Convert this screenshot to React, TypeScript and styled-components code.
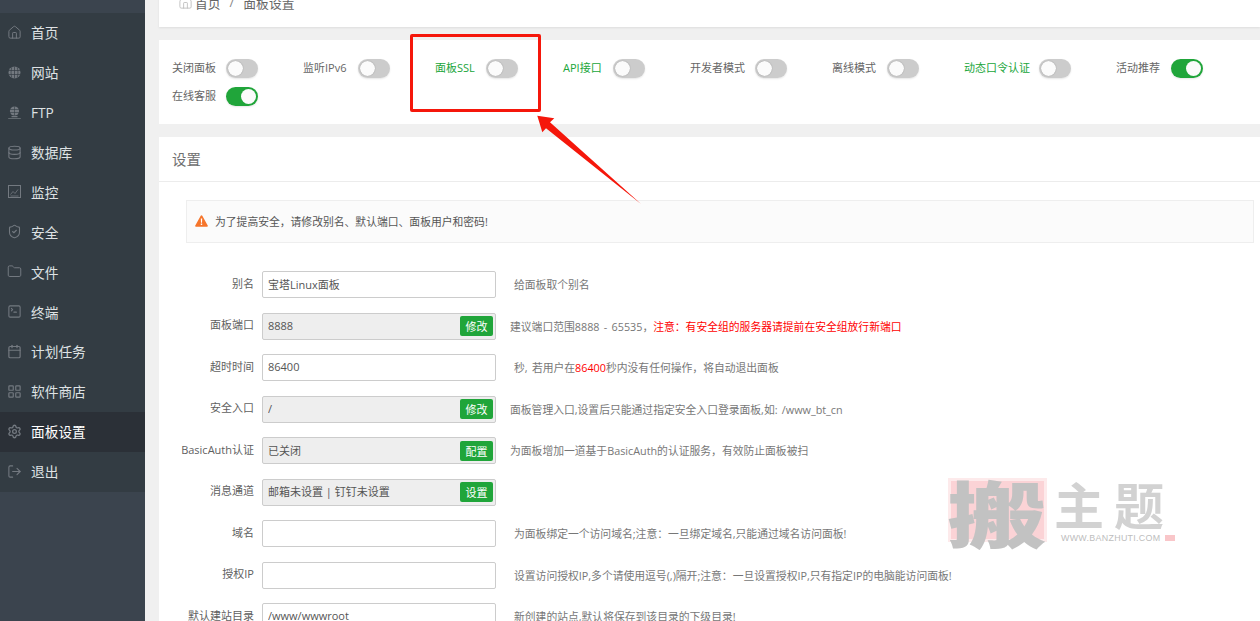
import React from "react";
import styled, { createGlobalStyle } from "styled-components";
import { Home, Database, ShieldCheck, Folder, SquareTerminal, Calendar, LayoutGrid, Settings, LogOut } from "lucide-react";

const Global = createGlobalStyle`
  html, body { margin: 0; height: 621px; overflow: hidden; background: #f0f0f0; }
  body { font-family: "Open Sans", "Noto Sans CJK SC", sans-serif; }
  #root { height: 621px; overflow: hidden; }
  * { box-sizing: border-box; }
`;

const Shell = styled.div`
  position: relative;
  display: flex;
  width: 1260px;
  height: 621px;
  overflow: hidden;
`;

const Sidebar = styled.nav`
  flex: 0 0 145px;
  padding-top: 13.4px;
  background: #3b444e;
`;

const NavList = styled.ul`
  list-style: none;
  margin: 0;
  padding: 0;
  background: #333c43;
`;

const NavItem = styled.li<{ $active?: boolean }>`
  display: flex;
  align-items: center;
  gap: 9px;
  height: 39.9px;
  padding: 0 0 2px 7px;
  font-size: 13.7px;
  color: ${(p) => (p.$active ? "#ffffff" : "#dfe2e4")};
  background: ${(p) => (p.$active ? "#2b3037" : "transparent")};
  svg { flex: 0 0 15px; color: #737980; }
`;

const Main = styled.main`
  flex: 1;
  min-width: 0;
  margin-left: 14px;
  display: flex;
  flex-direction: column;
  gap: 13px;
`;

const Crumb = styled.div`
  flex: 0 0 40px;
  margin-top: -13px;
  display: flex;
  align-items: center;
  padding: 0 0 10px 19px;
  background: #fff;
  box-shadow: 0 1px 2px rgba(0, 0, 0, 0.08);
  font-size: 12.8px;
  color: #666;
  svg { color: #bdbdbd; margin-right: 2px; }
`;

const Sep = styled.span`
  margin: 0 9px;
  color: #888;
`;

const SwitchPanel = styled.section`
  flex: 0 0 84px;
  display: flex;
  flex-wrap: wrap;
  align-content: flex-start;
  column-gap: 45px;
  padding: 14px 13px 0;
  background: #fff;
`;

const SwitchItem = styled.label`
  display: flex;
  align-items: center;
  gap: 10px;
  height: 28px;
`;

const SwitchLabel = styled.span<{ $green?: boolean; $w: number }>`
  width: ${(p) => p.$w}px;
  padding-bottom: 2px;
  font-size: 11px;
  white-space: nowrap;
  color: ${(p) => (p.$green ? "#20a53a" : "#666")};
`;

const Toggle = styled.span<{ $on?: boolean }>`
  display: flex;
  justify-content: ${(p) => (p.$on ? "flex-end" : "flex-start")};
  align-items: center;
  width: 32px;
  height: 19px;
  padding: 2px;
  border-radius: 10px;
  background: ${(p) => (p.$on ? "#20a53a" : "#ccc")};
  box-shadow: 0 1px 2px rgba(0, 0, 0, 0.1);
  &::after {
    content: "";
    width: 15px;
    height: 15px;
    border-radius: 50%;
    background: #fbfbfb;
    box-shadow: ${(p) => (p.$on ? "none" : "0 0 1px #777")};
  }
`;

const Settings_ = styled.section`
  flex: 1;
  background: #fff;
`;

const Title = styled.h2`
  margin: 0;
  height: 45px;
  padding-left: 13px;
  font-size: 14.4px;
  font-weight: 400;
  line-height: 46px;
  color: #707070;
  border-bottom: 1px solid #ececec;
`;

const Body = styled.div`
  padding: 18px 6px 0 27px;
`;

const Alert = styled.div`
  display: flex;
  align-items: center;
  gap: 7px;
  height: 43px;
  padding: 0 0 2px 8px;
  font-size: 10.8px;
  color: #555;
  background: #fbfbfb;
  border: 1px solid #eee;
`;

const Form = styled.div`
  display: flex;
  flex-direction: column;
  gap: 14.5px;
  margin: 28px 0 0 -27px;
`;

const Row = styled.div`
  display: flex;
  align-items: center;
  height: 27px;
`;

const RowLabel = styled.span`
  flex: 0 0 95px;
  padding-bottom: 4px;
  font-size: 11px;
  text-align: right;
  color: #5f5f5f;
  white-space: nowrap;
`;

const Field = styled.div<{ $locked?: boolean }>`
  flex: 0 0 234px;
  height: 27px;
  margin-left: 8px;
  display: flex;
  align-items: center;
  padding: 0 2px 0 5px;
  border: 1px solid #ccc;
  border-radius: 2px;
  background: ${(p) => (p.$locked ? "#eee" : "#fff")};
`;

const FieldInput = styled.input`
  flex: 1;
  min-width: 0;
  padding: 0 0 2px;
  border: 0;
  outline: 0;
  background: transparent;
  font: 11px "Open Sans", "Noto Sans CJK SC", sans-serif;
  color: #555;
`;

const FieldButton = styled.button`
  flex: 0 0 33px;
  height: 20px;
  padding: 0;
  border: 0;
  border-radius: 2px;
  background: #20a53a;
  color: #fff;
  font: 11px "Open Sans", "Noto Sans CJK SC", sans-serif;
`;

const Note = styled.span<{ $inset?: boolean }>`
  margin-left: ${(p) => (p.$inset ? "18px" : "14px")};
  padding-bottom: 1px;
  font-size: 10.8px;
  word-spacing: 1.5px;
  color: #777;
  white-space: nowrap;
`;

const Red = styled.span`
  color: #f00;
`;

const RedBox = styled.div`
  position: absolute;
  left: 410px;
  top: 34px;
  width: 131px;
  height: 78px;
  border: 3px solid #f5170b;
  border-radius: 2px;
`;

const ArrowMark = styled.svg`
  position: absolute;
  left: 530px;
  top: 110px;
`;

const Watermark = styled.div`
  position: absolute;
  left: 948px;
  top: 478px;
  width: 232px;
  height: 68px;
  display: flex;
`;

const Seal = styled.div`
  flex: 0 0 99px;
  height: 64px;
  display: flex;
  align-items: center;
  justify-content: center;
  overflow: visible;
  background: #fbd3d6;
  border: 3px solid #fdeaeb;
  font-size: 72px;
  font-weight: 900;
  line-height: 64px;
  color: #c2c2c2;
`;

const SealGlyph = styled.span`
  display: inline-block;
  transform: translateY(4px) scaleX(1.38);
`;

const Brand = styled.div`
  margin-left: 7px;
  display: flex;
  flex-direction: column;
  color: #d2d2d2;
`;

const BrandName = styled.div`
  height: 50px;
  margin-top: 3px;
  font-size: 50px;
  font-weight: 700;
  line-height: 50px;
  letter-spacing: 10px;
  white-space: nowrap;
`;

const BrandUrl = styled.div`
  display: flex;
  align-items: center;
  gap: 5px;
  margin: 2px 0 0 7px;
  font: 8.9px "Liberation Sans", sans-serif;
  letter-spacing: 0.3px;
  color: #bdbdbd;
  white-space: nowrap;
  &::after {
    content: "";
    width: 10px;
    height: 6px;
    background: #f9c6c9;
  }
`;

const GlobeIcon = () => (
  <svg width="15" height="15" viewBox="-1 -1 15 15" fill="none" stroke="none">
    <circle cx="6.5" cy="6.5" r="6" fill="currentColor" />
    <path d="M.5 4.5h12M.5 8.5h12M6.5.5v12M3.8 1.5c-1 3-1 7 0 10M9.2 1.5c1 3 1 7 0 10" stroke="#333c43" strokeWidth=".7" />
  </svg>
);

const FtpIcon = () => (
  <svg width="15" height="15" viewBox="-1 -1 15 15" fill="none">
    <circle cx="6.5" cy="5" r="4.6" fill="currentColor" />
    <path d="M2 3.5h9M2 6.5h9M6.5.5v9" stroke="#333c43" strokeWidth=".6" />
    <path d="M3.5 10h6v1.2h-6zM.2 12h12.6v.8H.2z" fill="currentColor" />
  </svg>
);

const MonitorIcon = () => (
  <svg width="15" height="15" viewBox="-1 -1 15 15" fill="none" stroke="currentColor" strokeWidth="1">
    <rect x=".5" y=".5" width="12" height="12" />
    <path d="M2.5 9.5l2.5-3 2 2 3-4M2.5 11h8" strokeWidth=".8" />
  </svg>
);

const navItems: { label: string; icon: React.ReactNode; active?: boolean }[] = [
  { label: "首页", icon: <Home size={15} strokeWidth={1.6} /> },
  { label: "网站", icon: <GlobeIcon /> },
  { label: "FTP", icon: <FtpIcon /> },
  { label: "数据库", icon: <Database size={15} strokeWidth={1.7} /> },
  { label: "监控", icon: <MonitorIcon /> },
  { label: "安全", icon: <ShieldCheck size={15} strokeWidth={1.7} /> },
  { label: "文件", icon: <Folder size={15} strokeWidth={1.6} /> },
  { label: "终端", icon: <SquareTerminal size={15} strokeWidth={1.7} /> },
  { label: "计划任务", icon: <Calendar size={15} strokeWidth={1.9} /> },
  { label: "软件商店", icon: <LayoutGrid size={15} strokeWidth={1.9} /> },
  { label: "面板设置", icon: <Settings size={15} strokeWidth={2.1} />, active: true },
  { label: "退出", icon: <LogOut size={15} strokeWidth={1.7} /> },
];

const switches: { label: string; w: number; on?: boolean; green?: boolean }[] = [
  { label: "关闭面板", w: 44 },
  { label: "监听IPv6", w: 45 },
  { label: "面板SSL", w: 41, green: true },
  { label: "API接口", w: 40, green: true },
  { label: "开发者模式", w: 55 },
  { label: "离线模式", w: 45 },
  { label: "动态口令认证", w: 65, green: true },
  { label: "活动推荐", w: 45, on: true },
  { label: "在线客服", w: 44, on: true },
];

const rows: { label: string; value: string; action?: string; note?: React.ReactNode; inset?: boolean }[] = [
  { label: "别名", value: "宝塔Linux面板", note: "给面板取个别名", inset: true },
  {
    label: "面板端口",
    value: "8888",
    action: "修改",
    note: (
      <>
        建议端口范围8888 - 65535，<Red>注意：有安全组的服务器请提前在安全组放行新端口</Red>
      </>
    ),
  },
  {
    label: "超时时间",
    value: "86400",
    inset: true,
    note: (
      <>
        秒, 若用户在<Red>86400</Red>秒内没有任何操作，将自动退出面板
      </>
    ),
  },
  { label: "安全入口", value: "/", action: "修改", note: "面板管理入口,设置后只能通过指定安全入口登录面板,如: /www_bt_cn" },
  { label: "BasicAuth认证", value: "已关闭", action: "配置", note: "为面板增加一道基于BasicAuth的认证服务，有效防止面板被扫" },
  { label: "消息通道", value: "邮箱未设置 | 钉钉未设置", action: "设置" },
  { label: "域名", value: "", inset: true, note: "为面板绑定一个访问域名;注意：一旦绑定域名,只能通过域名访问面板!" },
  { label: "授权IP", value: "", inset: true, note: "设置访问授权IP,多个请使用逗号(,)隔开;注意：一旦设置授权IP,只有指定IP的电脑能访问面板!" },
  { label: "默认建站目录", value: "/www/wwwroot", inset: true, note: "新创建的站点,默认将保存到该目录的下级目录!" },
];

export default function App() {
  return (
    <Shell>
      <Global />
      <Sidebar>
        <NavList>
          {navItems.map((n) => (
            <NavItem key={n.label} $active={n.active}>
              {n.icon}
              {n.label}
            </NavItem>
          ))}
        </NavList>
      </Sidebar>
      <Main>
        <Crumb>
          <Home size={15} strokeWidth={1.4} />
          首页
          <Sep>/</Sep>
          面板设置
        </Crumb>
        <SwitchPanel>
          {switches.map((s) => (
            <SwitchItem key={s.label}>
              <SwitchLabel $green={s.green} $w={s.w}>{s.label}</SwitchLabel>
              <Toggle $on={s.on} />
            </SwitchItem>
          ))}
        </SwitchPanel>
        <Settings_>
          <Title>设置</Title>
          <Body>
            <Alert>
              <svg width="13" height="12" viewBox="0 0 13 12">
                <path d="M6.5.3a.9.9 0 0 1 .8.5l5.4 9.6a.9.9 0 0 1-.8 1.3H1.1a.9.9 0 0 1-.8-1.3L5.7.8a.9.9 0 0 1 .8-.5z" fill="#f6752b" />
                <path d="M5.8 3.6h1.4l-.2 4.2H6zM5.8 8.6h1.4V10H5.8z" fill="#fff" />
              </svg>
              为了提高安全，请修改别名、默认端口、面板用户和密码!
            </Alert>
            <Form>
              {rows.map((r) => (
                <Row key={r.label}>
                  <RowLabel>{r.label}</RowLabel>
                  <Field $locked={!!r.action}>
                    <FieldInput readOnly value={r.value} />
                    {r.action && <FieldButton>{r.action}</FieldButton>}
                  </Field>
                  {r.note && <Note $inset={r.inset}>{r.note}</Note>}
                </Row>
              ))}
            </Form>
          </Body>
        </Settings_>
      </Main>
      <RedBox />
      <ArrowMark width="115" height="98" viewBox="530 110 115 98">
        <polygon points="537.3,115.7 554.3,118.3 550,122.3 641,204 546,128.3 542.3,132.3" fill="#f5170b" />
      </ArrowMark>
      <Watermark>
        <Seal><SealGlyph>搬</SealGlyph></Seal>
        <Brand>
          <BrandName>主题</BrandName>
          <BrandUrl>WWW.BANZHUTI.COM</BrandUrl>
        </Brand>
      </Watermark>
    </Shell>
  );
}
